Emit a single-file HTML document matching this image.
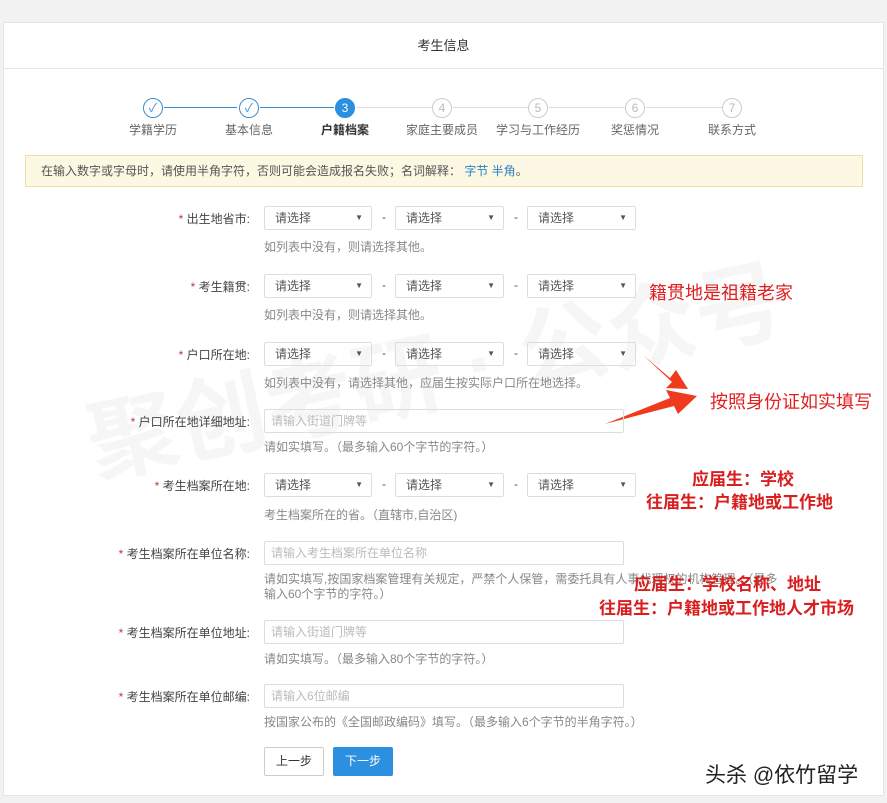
<!DOCTYPE html>
<html><head><meta charset="utf-8"><style>
*{margin:0;padding:0;box-sizing:border-box}
body{width:887px;height:803px;background:#f2f2f2;font-family:"Liberation Sans","Noto Sans CJK SC",sans-serif;font-size:12px;color:#555;position:relative;overflow:hidden}
.card{position:absolute;left:3px;top:22px;width:881px;height:774px;background:#fff;border:1px solid #e5e5e5}
.a{position:absolute;white-space:nowrap}
.hd{left:0;right:0;top:0;height:46px;border-bottom:1px solid #e5e5e5;text-align:center;line-height:46px;font-size:13px;color:#333}
.c{width:20px;height:20px;border-radius:50%;border:1px solid #ccc;text-align:center;line-height:18px;font-size:12px;color:#bbb;background:#fff}
.c.d{border-color:#3a8fd0;color:#3a8fd0}
.c.cur{background:#2d8fe0;border-color:#2d8fe0;color:#fff}
.ln{height:1px;background:#ddd}
.ln.d{background:#3a8fc8}
.sl{font-size:12px;color:#666;transform:translateX(-50%)}
.sel{height:24px;border:1px solid #ddd;border-radius:2px;line-height:22px;padding-left:10px;color:#555;font-size:12px}
.sel:after{content:"▼";position:absolute;right:8px;font-size:8px;color:#555}
.inp{height:24px;border:1px solid #ddd;border-radius:2px;line-height:22px;padding-left:6px;color:#bbb;width:360px}
.lb{text-align:right;width:240px;color:#444;font-size:12px}
.lb b{color:#c33;font-weight:normal}
.hp{color:#888;font-size:12px}
.red{color:#e02020;font-size:18px}
.rb{color:#d81e1e;font-size:17px;font-weight:bold}
</style></head><body>
<div class="card">
<div class="a hd">考生信息</div>
</div>
<div class="a ln d" style="left:164px;top:107px;width:73px"></div>
<div class="a ln d" style="left:260px;top:107px;width:74px"></div>
<div class="a ln" style="left:356px;top:107px;width:76px"></div>
<div class="a ln" style="left:453px;top:107px;width:75px"></div>
<div class="a ln" style="left:549px;top:107px;width:76px"></div>
<div class="a ln" style="left:646px;top:107px;width:76px"></div>
<div class="a c d" style="left:143px;top:98px">✓</div>
<div class="a c d" style="left:239px;top:98px">✓</div>
<div class="a c cur" style="left:335px;top:98px">3</div>
<div class="a c" style="left:432px;top:98px">4</div>
<div class="a c" style="left:528px;top:98px">5</div>
<div class="a c" style="left:625px;top:98px">6</div>
<div class="a c" style="left:722px;top:98px">7</div>
<div class="a sl" style="left:153px;top:121px">学籍学历</div>
<div class="a sl" style="left:249px;top:121px">基本信息</div>
<div class="a sl" style="left:345px;top:121px;color:#333;font-weight:bold">户籍档案</div>
<div class="a sl" style="left:442px;top:121px">家庭主要成员</div>
<div class="a sl" style="left:538px;top:121px">学习与工作经历</div>
<div class="a sl" style="left:635px;top:121px">奖惩情况</div>
<div class="a sl" style="left:732px;top:121px">联系方式</div>
<div class="a" style="left:25px;top:155px;width:838px;height:32px;background:#fcf8e3;border:1px solid #f0dfa0;line-height:30px;padding-left:15px;color:#555">在输入数字或字母时，请使用半角字符，否则可能会造成报名失败；名词解释： <span style="color:#2a7fc0">字节 半角</span>。</div>

<div class="a" style="left:80px;top:300px;font-size:90px;font-weight:bold;color:rgba(0,0,0,0.035);transform:rotate(-12deg)">聚创考研 · 公众号</div>

<div class="a lb" style="left:10px;top:210px"><b>*</b> 出生地省市:</div>
<div class="a sel" style="left:264px;top:206px;width:108px">请选择</div><div class="a" style="left:382px;top:210px">-</div>
<div class="a sel" style="left:395px;top:206px;width:109px">请选择</div><div class="a" style="left:514px;top:210px">-</div>
<div class="a sel" style="left:527px;top:206px;width:109px">请选择</div>
<div class="a hp" style="left:264px;top:238px">如列表中没有，则请选择其他。</div>

<div class="a lb" style="left:10px;top:278px"><b>*</b> 考生籍贯:</div>
<div class="a sel" style="left:264px;top:274px;width:108px">请选择</div><div class="a" style="left:382px;top:278px">-</div>
<div class="a sel" style="left:395px;top:274px;width:109px">请选择</div><div class="a" style="left:514px;top:278px">-</div>
<div class="a sel" style="left:527px;top:274px;width:109px">请选择</div>
<div class="a hp" style="left:264px;top:306px">如列表中没有，则请选择其他。</div>
<div class="a red" style="left:649px;top:279px">籍贯地是祖籍老家</div>

<div class="a lb" style="left:10px;top:346px"><b>*</b> 户口所在地:</div>
<div class="a sel" style="left:264px;top:342px;width:108px">请选择</div><div class="a" style="left:382px;top:346px">-</div>
<div class="a sel" style="left:395px;top:342px;width:109px">请选择</div><div class="a" style="left:514px;top:346px">-</div>
<div class="a sel" style="left:527px;top:342px;width:109px">请选择</div>
<div class="a hp" style="left:264px;top:374px">如列表中没有，请选择其他，应届生按实际户口所在地选择。</div>

<svg class="a" style="left:600px;top:350px" width="110" height="80">
<polygon points="43,5 70,28 76,20 88,39 66,38 72,32" fill="#f03a1e"/>
<polygon points="5,74 70,48 66,40 97,46 78,64 74,56" fill="#f03a1e"/>
</svg>
<div class="a red" style="left:710px;top:388px">按照身份证如实填写</div>

<div class="a lb" style="left:10px;top:413px"><b>*</b> 户口所在地详细地址:</div>
<div class="a inp" style="left:264px;top:409px">请输入街道门牌等</div>
<div class="a hp" style="left:264px;top:438px">请如实填写。（最多输入60个字节的字符。）</div>

<div class="a lb" style="left:10px;top:477px"><b>*</b> 考生档案所在地:</div>
<div class="a sel" style="left:264px;top:473px;width:108px">请选择</div><div class="a" style="left:382px;top:477px">-</div>
<div class="a sel" style="left:395px;top:473px;width:109px">请选择</div><div class="a" style="left:514px;top:477px">-</div>
<div class="a sel" style="left:527px;top:473px;width:109px">请选择</div>
<div class="a hp" style="left:264px;top:506px">考生档案所在的省。（直辖市,自治区)</div>
<div class="a rb" style="left:692px;top:465px">应届生：学校</div>
<div class="a rb" style="left:646px;top:488px">往届生：户籍地或工作地</div>

<div class="a lb" style="left:10px;top:545px"><b>*</b> 考生档案所在单位名称:</div>
<div class="a inp" style="left:264px;top:541px">请输入考生档案所在单位名称</div>
<div class="a hp" style="left:264px;top:570px">请如实填写,按国家档案管理有关规定，严禁个人保管，需委托具有人事代理权的机构管理。（最多</div>
<div class="a hp" style="left:264px;top:585px">输入60个字节的字符。）</div>
<div class="a rb" style="left:634px;top:570px">应届生：学校名称、地址</div>
<div class="a rb" style="left:599px;top:594px">往届生：户籍地或工作地人才市场</div>

<div class="a lb" style="left:10px;top:624px"><b>*</b> 考生档案所在单位地址:</div>
<div class="a inp" style="left:264px;top:620px">请输入街道门牌等</div>
<div class="a hp" style="left:264px;top:650px">请如实填写。（最多输入80个字节的字符。）</div>

<div class="a lb" style="left:10px;top:688px"><b>*</b> 考生档案所在单位邮编:</div>
<div class="a inp" style="left:264px;top:684px">请输入6位邮编</div>
<div class="a hp" style="left:264px;top:713px">按国家公布的《全国邮政编码》填写。（最多输入6个字节的半角字符。）</div>

<div class="a" style="left:264px;top:747px;width:60px;height:29px;border:1px solid #ccc;border-radius:2px;text-align:center;line-height:27px;color:#333;background:#fff">上一步</div>
<div class="a" style="left:333px;top:747px;width:60px;height:29px;border-radius:2px;text-align:center;line-height:29px;color:#fff;background:#2d8fe0">下一步</div>
<div class="a" style="left:705px;top:759px;font-size:21px;color:#222">头杀 @依竹留学</div>
</body></html>
